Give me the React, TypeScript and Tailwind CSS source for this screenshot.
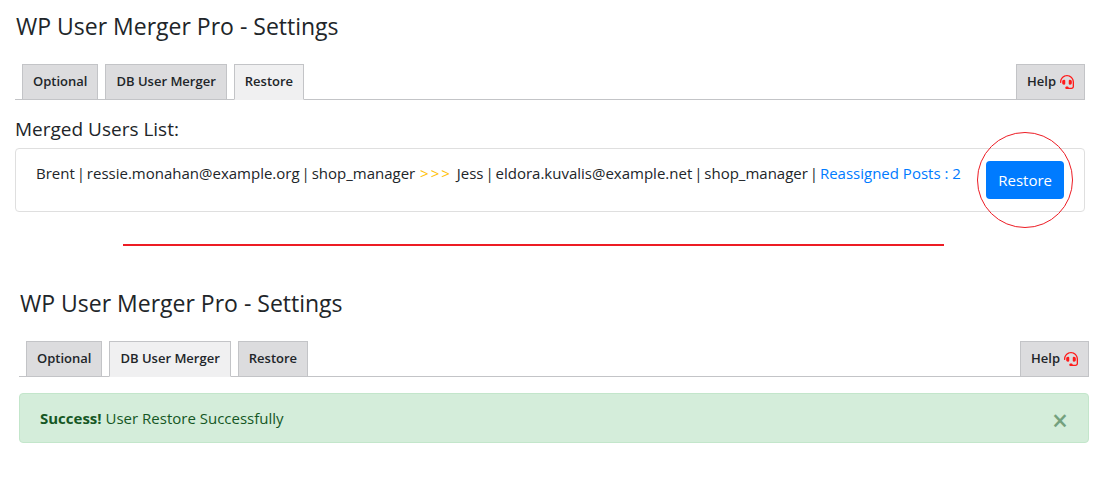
import type { ReactNode } from "react";
import clsx from "clsx";
import { FaHeadset } from "react-icons/fa";

const TABS = ["Optional", "DB User Merger", "Restore"];

interface TabProps {
  active?: boolean;
  children: ReactNode;
}

function Tab({ active, children }: TabProps) {
  return (
    <button
      type="button"
      className={clsx(
        "-mb-px flex h-9 items-center gap-1 border border-[#c3c4c7] px-2.5 text-[13px] font-semibold",
        active ? "border-b-[#f0f0f1] bg-[#f0f0f1]" : "bg-[#dcdcde]"
      )}
    >
      {children}
    </button>
  );
}

function SettingsHeader({ active }: { active: string }) {
  return (
    <>
      <h1 className="pl-px text-[23px] leading-7">WP User Merger Pro - Settings</h1>
      <nav className="mt-6 flex gap-[7px] border-b border-[#c3c4c7] pl-[7px]">
        {TABS.map((tab) => (
          <Tab key={tab} active={tab === active}>
            {tab}
          </Tab>
        ))}
        <div className="ml-auto flex">
          <Tab>
            Help
            <FaHeadset className="size-3.5 text-[#ff1a1a]" aria-hidden="true" />
          </Tab>
        </div>
      </nav>
    </>
  );
}

function Bar() {
  return <span className="-mx-0.5">|</span>;
}

function MergedUser() {
  return (
    <div className="flex items-start justify-between rounded border border-[#dfdfdf] px-5 py-3">
      <p className="text-[15px] leading-6">
        Brent <Bar /> ressie.monahan@example.org <Bar /> shop_manager{" "}
        <span className="mr-[3px] ml-px inline-flex gap-0.5 text-[#ffc107]">
          <span>&gt;</span>
          <span>&gt;</span>
          <span>&gt;</span>
        </span>{" "}
        Jess <Bar /> eldora.kuvalis@example.net <Bar /> shop_manager <Bar />{" "}
        <a href="#posts" className="text-[#007bff]">
          Reassigned Posts : 2
        </a>
      </p>
      <div className="relative">
        <button type="button" className="h-[38px] rounded bg-[#007bff] px-3 text-[15px] text-white">
          Restore
        </button>
        <span className="pointer-events-none absolute top-1/2 left-1/2 size-24 -translate-x-1/2 -translate-y-1/2 rounded-full border border-[#ed1c24]" />
      </div>
    </div>
  );
}

function SuccessAlert() {
  return (
    <div
      role="alert"
      className="mt-4 flex h-[50px] items-center justify-between rounded border border-[#c3e6cb] bg-[#d4edda] px-5 text-[15px] text-[#155724]"
    >
      <p>
        <strong className="font-bold">Success!</strong> User Restore Successfully
      </p>
      <button type="button" aria-label="Close" className="pt-1 text-[28px] leading-6 font-semibold opacity-50">
        ×
      </button>
    </div>
  );
}

export default function App() {
  return (
    <main className="bg-white font-['Open_Sans','Noto_Sans',sans-serif] text-[#212529]">
      <section className="pt-3 pr-[26px] pl-[15px]">
        <SettingsHeader active="Restore" />
        <h2 className="mt-[15px] mb-[5px] text-[19px] leading-7">Merged Users List:</h2>
        <MergedUser />
      </section>
      <hr className="mt-8 mr-[167px] ml-[123px] border-t-2 border-[#ed1c24]" />
      <section className="pt-[43px] pr-[22px] pl-[19px]">
        <SettingsHeader active="DB User Merger" />
        <SuccessAlert />
      </section>
    </main>
  );
}
